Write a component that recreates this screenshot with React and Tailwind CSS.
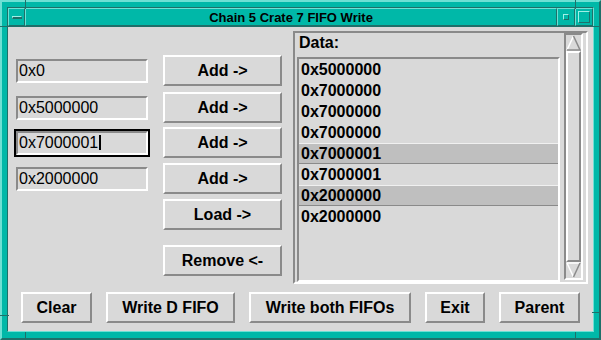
const RAISED = "border-2 border-t-white border-l-white border-r-[#8a8a8a] border-b-[#8a8a8a]";
const SUNKEN = "border-2 border-t-[#8a8a8a] border-l-[#8a8a8a] border-r-white border-b-white";
const TEAL_UP = "border border-t-[#6ee0d4] border-l-[#6ee0d4] border-r-[#1f6f69] border-b-[#1f6f69]";

const ROWS = [
  ["0x5000000", false],
  ["0x7000000", false],
  ["0x7000000", false],
  ["0x7000000", false],
  ["0x7000001", true],
  ["0x7000001", false],
  ["0x2000000", true],
  ["0x2000000", false],
];

function Btn({ className, children }) {
  return (
    <button className={`h-[31px] shrink-0 bg-[#d9d9d9] ${RAISED} font-bold text-[16px] leading-none flex items-center justify-center ${className}`}>
      {children}
    </button>
  );
}

function Field({ value, focused, className }) {
  return (
    <div className={`w-[136px] h-[28px] border-2 ${focused ? "border-black" : "border-transparent"} ${className}`}>
      <div className={`h-full ${SUNKEN} flex items-center pl-[1px] text-[16px] leading-none`}>
        <span>{value}</span>
        {focused && <span className="w-[2px] h-[15px] bg-black ml-[1px]" />}
      </div>
    </div>
  );
}

function Arrow({ up }) {
  return (
    <svg width="15" height="16" viewBox="0 0 15 16" className="shrink-0">
      {up ? (
        <>
          <path d="M7.5 1 L1 15" stroke="#ffffff" strokeWidth="1.5" fill="none" />
          <path d="M7.5 1 L14 15 L1 15" stroke="#8a8a8a" strokeWidth="1.5" fill="none" />
        </>
      ) : (
        <>
          <path d="M1 1 L14 1 M1 1 L7.5 15" stroke="#ffffff" strokeWidth="1.5" fill="none" />
          <path d="M14 1 L7.5 15" stroke="#8a8a8a" strokeWidth="1.5" fill="none" />
        </>
      )}
    </svg>
  );
}

function Notch({ className }) {
  return <div className={`absolute bg-[#1f6f69] ${className}`} />;
}

export default function App() {
  return (
    <div className="w-[601px] h-[340px] relative bg-[#00b8a8] border-2 border-t-[#6ee0d4] border-l-[#6ee0d4] border-r-[#1f6f69] border-b-[#1f6f69] pt-[5px] pl-[5px] pr-[5px] pb-[6px] font-['Liberation_Sans',Arial,sans-serif] text-black">
      <div className="w-full h-full flex flex-col border border-t-[#1f6f69] border-l-[#1f6f69] border-r-[#6ee0d4] border-b-[#6ee0d4]">
        {/* title bar */}
        <div className="h-[19px] flex border-b border-[#1f6f69] shrink-0">
          <div className={`w-[17px] ${TEAL_UP} flex items-center justify-center`}>
            <div className="w-[10px] h-[3px] bg-[#00b8a8] border-t border-l border-t-[#9ef0e6] border-l-[#9ef0e6] border-b-2 border-b-[#1f6f69] border-r border-r-[#1f6f69]" />
          </div>
          <div className={`flex-1 ${TEAL_UP} flex items-center justify-center font-bold text-[13px] leading-none`}>
            Chain 5 Crate 7 FIFO Write
          </div>
          <div className={`w-[18px] ${TEAL_UP} flex items-center justify-center`}>
            <div className="w-[6px] h-[6px] border border-t-[#9ef0e6] border-l-[#9ef0e6] border-r-[#1f6f69] border-b-[#1f6f69]" />
          </div>
          <div className={`w-[18px] ${TEAL_UP} flex items-center justify-center`}>
            <div className="w-[12px] h-[12px] border border-t-[#9ef0e6] border-l-[#9ef0e6] border-r-[#1f6f69] border-b-[#1f6f69]" />
          </div>
        </div>

        {/* client area */}
        <div className="flex-1 bg-[#d9d9d9] flex flex-col">
          <div className="flex h-[253px] mt-[4px] shrink-0">
            <div className="ml-[6px] flex flex-col">
              <div className="flex items-center mt-[24px]">
                <Field value="0x0" />
                <Btn className="w-[119px] ml-[13px]">Add -&gt;</Btn>
              </div>
              <div className="flex items-center mt-[6px]">
                <Field value="0x5000000" />
                <Btn className="w-[119px] ml-[13px]">Add -&gt;</Btn>
              </div>
              <div className="flex items-center mt-[4px]">
                <Field value="0x7000001" focused />
                <Btn className="w-[119px] ml-[13px]">Add -&gt;</Btn>
              </div>
              <div className="flex items-center mt-[5px]">
                <Field value="0x2000000" />
                <Btn className="w-[119px] ml-[13px]">Add -&gt;</Btn>
              </div>
              <Btn className="w-[119px] ml-[149px] mt-[5px]">Load -&gt;</Btn>
              <Btn className="w-[119px] ml-[149px] mt-[15px]">Remove &lt;-</Btn>
            </div>

            {/* data panel */}
            <div className="ml-[11px] w-[295px] h-[253px] border-2 border-t-[#8a8a8a] border-l-[#8a8a8a] border-r-white border-b-white flex">
              <div className="ml-[2px] w-[263px] flex flex-col">
                <div className="h-[24px] leading-[20px] font-bold text-[16px] pl-[2px]">Data:</div>
                <div className={`flex-1 ${SUNKEN} pt-[0px]`}>
                  {ROWS.map(([v, sel], i) => (
                    <div
                      key={i}
                      className={`h-[21px] leading-[20px] font-bold text-[16px] pl-[2px] ${sel ? "bg-[#bfbfbf] border-t border-b border-t-[#f0f0f0] border-b-[#8a8a8a]" : "border-t border-b border-transparent"}`}
                    >
                      {v}
                    </div>
                  ))}
                </div>
              </div>
              <div className={`ml-[4px] w-[19px] mb-[2px] ${SUNKEN} border flex flex-col items-center`}>
                <Arrow up />
                <div className={`flex-1 w-[15px] ${RAISED}`} />
                <Arrow />
              </div>
            </div>
          </div>

          {/* bottom buttons */}
          <div className="flex justify-center gap-[14px] mt-[8px]">
            <Btn className="w-[71px]">Clear</Btn>
            <Btn className="w-[129px]">Write D FIFO</Btn>
            <Btn className="w-[162px]">Write both FIFOs</Btn>
            <Btn className="w-[60px]">Exit</Btn>
            <Btn className="w-[81px]">Parent</Btn>
          </div>
        </div>
      </div>

      {/* resize handle notches */}
      <Notch className="left-[23px] top-[-2px] w-[1px] h-[9px]" />
      <Notch className="left-[573px] top-[-2px] w-[1px] h-[9px]" />
      <Notch className="left-[23px] bottom-[-2px] w-[1px] h-[8px]" />
      <Notch className="left-[573px] bottom-[-2px] w-[1px] h-[8px]" />
      <Notch className="left-[-2px] top-[24px] w-[9px] h-[1px]" />
      <Notch className="right-[-2px] top-[24px] w-[9px] h-[1px]" />
      <Notch className="left-[-2px] top-[313px] w-[9px] h-[1px]" />
      <Notch className="right-[-2px] top-[310px] w-[9px] h-[1px]" />
    </div>
  );
}
